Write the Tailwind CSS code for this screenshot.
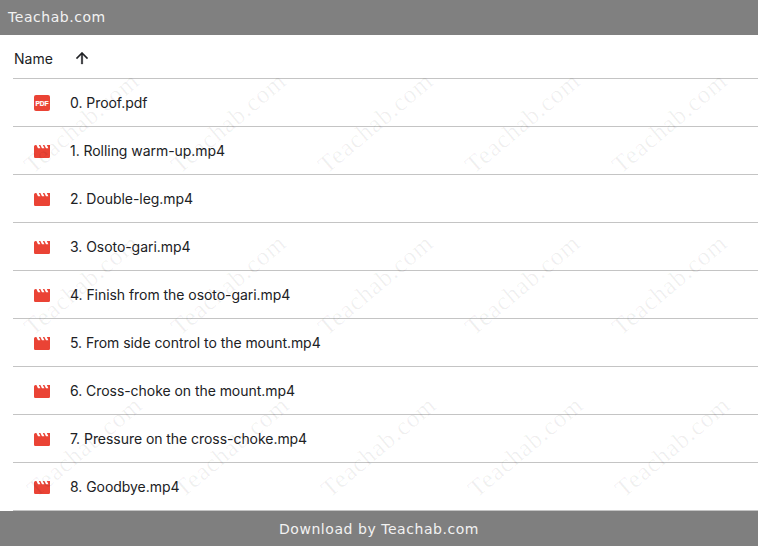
<!DOCTYPE html>
<html>
<head>
<meta charset="utf-8">
<script src="https://cdn.jsdelivr.net/npm/@tailwindcss/browser@4"></script>
</head>
<body class="w-[758px] h-[546px] overflow-hidden bg-white relative font-['Inter',sans-serif]">
<div class="h-[35px] bg-[#808080] text-[#f2f2f2] font-['DejaVu_Sans',sans-serif] text-[14px] tracking-[0.55px] pl-2 flex items-center">Teachab.com</div>

<div class="h-[44px] ml-[13px] border-b border-[#c4c4c4] flex items-center text-[#202124] text-[14px]">
  <span class="ml-[1px] w-[59px] pt-[4px]">Name</span>
  <svg class="w-[18px] h-[18px] mt-[2px]" viewBox="0 0 24 24" fill="#202124" stroke="#202124" stroke-width="0.4"><path d="M4 12l1.41 1.41L11 7.83V20h2V7.83l5.58 5.59L20 12l-8-8-8 8z"/></svg>
</div>

<div class="ml-[13px] text-[#202124] text-[14px] tracking-[-0.05px]">
  <div class="h-[48px] border-b border-[#c4c4c4] flex items-center">
    <svg class="w-4 h-4 ml-[21px] mr-[20px]" viewBox="0 0 16 16"><rect x="0" y="0" width="16" height="16" rx="2" fill="#ea4335"/><text x="8" y="10.6" text-anchor="middle" font-family="Liberation Sans" font-weight="700" font-size="6.6" fill="#fff" stroke="#fff" stroke-width="0.2">PDF</text></svg>
    <span>0. Proof.pdf</span>
  </div>
  <div class="h-[48px] border-b border-[#c4c4c4] flex items-center">
    <svg class="w-4 h-[13px] ml-[21px] mr-[20px] mt-[1px]" viewBox="2 4 20 16" preserveAspectRatio="none"><path fill="#ea4335" d="M18 4l2 4h-3l-2-4h-2l2 4h-3l-2-4H8l2 4H7L5 4H4c-1.1 0-1.99.9-1.99 2L2 18c0 1.1.9 2 2 2h16c1.1 0 2-.9 2-2V4h-4z"/></svg>
    <span>1. Rolling warm-up.mp4</span>
  </div>
  <div class="h-[48px] border-b border-[#c4c4c4] flex items-center">
    <svg class="w-4 h-[13px] ml-[21px] mr-[20px] mt-[1px]" viewBox="2 4 20 16" preserveAspectRatio="none"><path fill="#ea4335" d="M18 4l2 4h-3l-2-4h-2l2 4h-3l-2-4H8l2 4H7L5 4H4c-1.1 0-1.99.9-1.99 2L2 18c0 1.1.9 2 2 2h16c1.1 0 2-.9 2-2V4h-4z"/></svg>
    <span>2. Double-leg.mp4</span>
  </div>
  <div class="h-[48px] border-b border-[#c4c4c4] flex items-center">
    <svg class="w-4 h-[13px] ml-[21px] mr-[20px] mt-[1px]" viewBox="2 4 20 16" preserveAspectRatio="none"><path fill="#ea4335" d="M18 4l2 4h-3l-2-4h-2l2 4h-3l-2-4H8l2 4H7L5 4H4c-1.1 0-1.99.9-1.99 2L2 18c0 1.1.9 2 2 2h16c1.1 0 2-.9 2-2V4h-4z"/></svg>
    <span>3. Osoto-gari.mp4</span>
  </div>
  <div class="h-[48px] border-b border-[#c4c4c4] flex items-center">
    <svg class="w-4 h-[13px] ml-[21px] mr-[20px] mt-[1px]" viewBox="2 4 20 16" preserveAspectRatio="none"><path fill="#ea4335" d="M18 4l2 4h-3l-2-4h-2l2 4h-3l-2-4H8l2 4H7L5 4H4c-1.1 0-1.99.9-1.99 2L2 18c0 1.1.9 2 2 2h16c1.1 0 2-.9 2-2V4h-4z"/></svg>
    <span>4. Finish from the osoto-gari.mp4</span>
  </div>
  <div class="h-[48px] border-b border-[#c4c4c4] flex items-center">
    <svg class="w-4 h-[13px] ml-[21px] mr-[20px] mt-[1px]" viewBox="2 4 20 16" preserveAspectRatio="none"><path fill="#ea4335" d="M18 4l2 4h-3l-2-4h-2l2 4h-3l-2-4H8l2 4H7L5 4H4c-1.1 0-1.99.9-1.99 2L2 18c0 1.1.9 2 2 2h16c1.1 0 2-.9 2-2V4h-4z"/></svg>
    <span>5. From side control to the mount.mp4</span>
  </div>
  <div class="h-[48px] border-b border-[#c4c4c4] flex items-center">
    <svg class="w-4 h-[13px] ml-[21px] mr-[20px] mt-[1px]" viewBox="2 4 20 16" preserveAspectRatio="none"><path fill="#ea4335" d="M18 4l2 4h-3l-2-4h-2l2 4h-3l-2-4H8l2 4H7L5 4H4c-1.1 0-1.99.9-1.99 2L2 18c0 1.1.9 2 2 2h16c1.1 0 2-.9 2-2V4h-4z"/></svg>
    <span>6. Cross-choke on the mount.mp4</span>
  </div>
  <div class="h-[48px] border-b border-[#c4c4c4] flex items-center">
    <svg class="w-4 h-[13px] ml-[21px] mr-[20px] mt-[1px]" viewBox="2 4 20 16" preserveAspectRatio="none"><path fill="#ea4335" d="M18 4l2 4h-3l-2-4h-2l2 4h-3l-2-4H8l2 4H7L5 4H4c-1.1 0-1.99.9-1.99 2L2 18c0 1.1.9 2 2 2h16c1.1 0 2-.9 2-2V4h-4z"/></svg>
    <span>7. Pressure on the cross-choke.mp4</span>
  </div>
  <div class="h-[48px] border-b border-[#c4c4c4] flex items-center">
    <svg class="w-4 h-[13px] ml-[21px] mr-[20px] mt-[1px]" viewBox="2 4 20 16" preserveAspectRatio="none"><path fill="#ea4335" d="M18 4l2 4h-3l-2-4h-2l2 4h-3l-2-4H8l2 4H7L5 4H4c-1.1 0-1.99.9-1.99 2L2 18c0 1.1.9 2 2 2h16c1.1 0 2-.9 2-2V4h-4z"/></svg>
    <span>8. Goodbye.mp4</span>
  </div>
</div>

<!-- watermark overlay -->
<div class="absolute left-[8px] top-[42px] w-[735px] h-[486px] grid grid-cols-5 grid-rows-3 place-items-center pointer-events-none font-['Liberation_Serif',serif] text-[25px] tracking-[0.8px] text-black/[0.06] whitespace-nowrap">
  <span class="rotate-[-40deg]">Teachab.com</span>
  <span class="rotate-[-40deg]">Teachab.com</span>
  <span class="rotate-[-40deg]">Teachab.com</span>
  <span class="rotate-[-40deg]">Teachab.com</span>
  <span class="rotate-[-40deg]">Teachab.com</span>
  <span class="rotate-[-40deg]">Teachab.com</span>
  <span class="rotate-[-40deg]">Teachab.com</span>
  <span class="rotate-[-40deg]">Teachab.com</span>
  <span class="rotate-[-40deg]">Teachab.com</span>
  <span class="rotate-[-40deg]">Teachab.com</span>
  <span class="rotate-[-40deg] translate-x-[3px]">Teachab.com</span>
  <span class="rotate-[-40deg] translate-x-[3px]">Teachab.com</span>
  <span class="rotate-[-40deg] translate-x-[3px]">Teachab.com</span>
  <span class="rotate-[-40deg] translate-x-[3px]">Teachab.com</span>
  <span class="rotate-[-40deg] translate-x-[3px]">Teachab.com</span>
</div>

<div class="absolute left-0 right-0 bottom-0 h-[35px] bg-[#7f7f7f] text-[#f2f2f2] font-['DejaVu_Sans',sans-serif] text-[14px] tracking-[0.55px] flex items-center justify-center pt-[1px]">Download by Teachab.com</div>
</body>
</html>
